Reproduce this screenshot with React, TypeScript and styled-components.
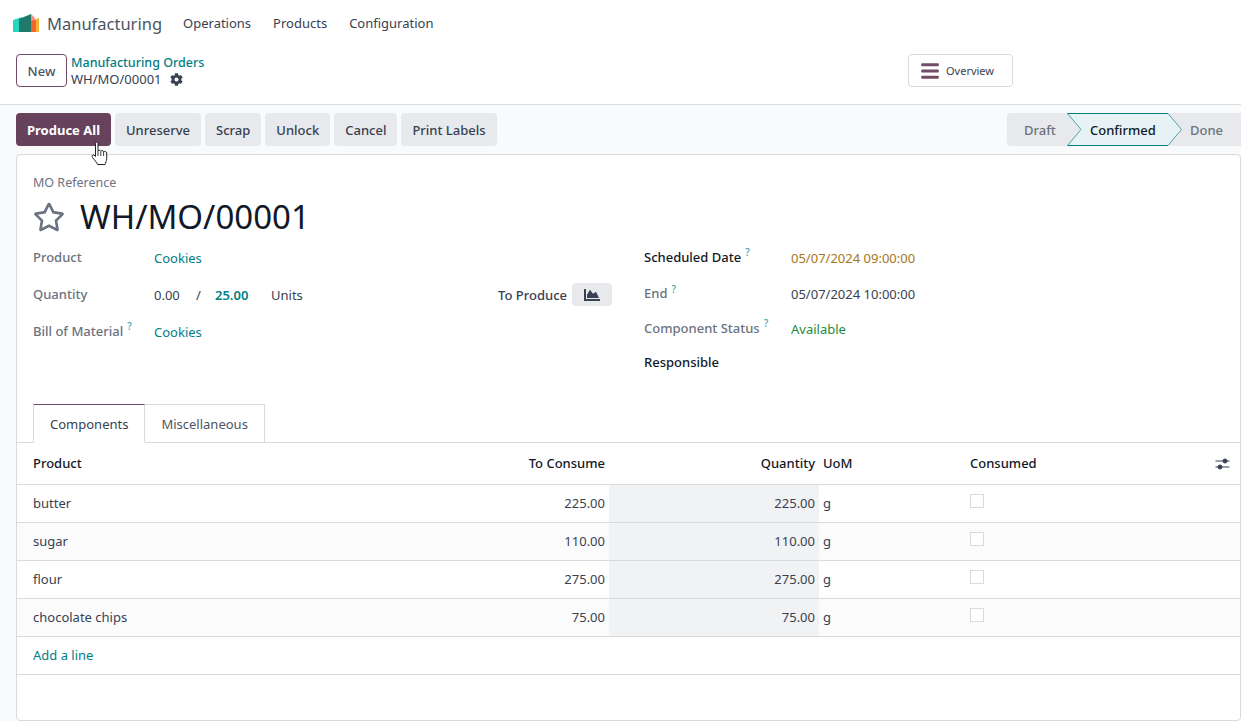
import React from "react";
import styled, { createGlobalStyle } from "styled-components";
import { FaBars, FaChartArea, FaCog, FaRegStar } from "react-icons/fa";

const Global = createGlobalStyle`
  html, body { margin: 0; padding: 0; height: 100%; }
  body { font-family: "Noto Sans", "Open Sans", Arial, sans-serif; font-size: 13px; color: #374151; background: #fff; overflow: hidden; }
  * { box-sizing: border-box; }
`;

const Page = styled.div`
  width: 1241px;
  height: 721px;
  display: flex;
  flex-direction: column;
  position: relative;
  overflow: hidden;
`;
const Nav = styled.nav`
  height: 46px;
  display: flex;
  align-items: center;
  padding-left: 12px;
  flex: none;
`;
const Brand = styled.span`
  font-size: 16.5px;
  color: #4b5563;
  margin-left: 7px;
  margin-right: 21px;
`;
const NavItem = styled.span`
  font-size: 13px;
  color: #374151;
  margin-right: 22px;
`;
const Control = styled.div`
  height: 59px;
  flex: none;
  display: flex;
  align-items: flex-start;
  padding: 8px 0 0 16px;
  border-bottom: 1px solid #d8dadd;
  position: relative;
`;
const NewButton = styled.button`
  width: 51px;
  height: 33px;
  background: #fff;
  border: 1px solid #714b67;
  border-radius: 4px;
  font: 500 13px "Noto Sans", sans-serif;
  color: #4b5563;
  padding: 0;
  margin-right: 4px;
`;
const Crumbs = styled.div`
  display: flex;
  flex-direction: column;
  line-height: 17px;
  padding-top: 0;
`;
const CrumbLink = styled.span`
  font-weight: 500;
  font-size: 12.5px;
  color: #017e84;
`;
const CrumbCurrent = styled.span`
  display: flex;
  align-items: center;
  gap: 8px;
  color: #374151;
  svg { color: #374151; }
`;
const Overview = styled.button`
  position: absolute;
  left: 908px;
  top: 8px;
  width: 105px;
  height: 33px;
  background: #fff;
  border: 1px solid #d8dadd;
  border-radius: 4px;
  display: flex;
  align-items: center;
  gap: 6px;
  padding: 0 0 0 11px;
  font: 400 11px "Noto Sans", sans-serif;
  color: #374151;
  svg { color: #714b67; }
`;
const Main = styled.div`
  flex: 1;
  background: #f9fafb;
  padding: 8px 0 0 16px;
  display: flex;
  flex-direction: column;
  min-height: 0;
`;
const ActionBar = styled.div`
  display: flex;
  justify-content: space-between;
  height: 33px;
  flex: none;
`;
const Actions = styled.div`
  display: flex;
  gap: 4px;
`;
const Action = styled.button<{ $primary?: boolean }>`
  height: 33px;
  padding: 0 11px;
  border: 0;
  border-radius: 4px;
  font: 500 13px "Noto Sans", sans-serif;
  background: ${(p) => (p.$primary ? "#714b67" : "#e7e9ed")};
  background: ${(p) => (p.$primary ? "#66425c" : "#e7e9ed")};
  color: ${(p) => (p.$primary ? "#fff" : "#374151")};
  font-weight: ${(p) => (p.$primary ? 700 : 500)};
`;
const Status = styled.div`
  display: flex;
  width: 234px;
  height: 33px;
  background: #e7e9ed;
  border-radius: 4px 0 0 4px;
  position: relative;
  font-weight: 500;
  color: #6b7280;
  align-items: center;
`;
const Chevron = styled.svg`
  position: absolute;
  left: 60px;
  top: 0;
`;
const Stage = styled.span<{ $width: number; $active?: boolean }>`
  position: relative;
  width: ${(p) => p.$width}px;
  text-align: left;
  color: ${(p) => (p.$active ? "#111827" : "#6b7280")};
`;
const Card = styled.section`
  flex: 1;
  margin-top: 8px;
  background: #fff;
  border: 1px solid #d8dadd;
  border-radius: 4px;
  display: flex;
  flex-direction: column;
  min-height: 0;
  border-bottom-width: 1px;
  margin-bottom: 0;
  height: 566px;
`;
const TitleBlock = styled.div`
  padding: 19px 16px 0;
  height: 84px;
  flex: none;
`;
const Kicker = styled.div`
  color: #6b7280;
  font-size: 12.5px;
  line-height: 17px;
`;
const TitleRow = styled.div`
  display: flex;
  align-items: center;
  gap: 15px;
  margin-top: 3px;
  svg { color: #6b7280; }
`;
const Title = styled.h1`
  margin: 0;
  font-size: 33px;
  font-weight: 400;
  line-height: 45px;
  color: #111827;
`;
const Groups = styled.div`
  display: grid;
  grid-template-columns: 579px 1fr;
  column-gap: 32px;
  padding: 0 16px;
  height: 165px;
  flex: none;
`;
const Column = styled.div`
  display: flex;
  flex-direction: column;
`;
const Row = styled.div<{ $height: number; $labelWidth: number }>`
  height: ${(p) => p.$height}px;
  display: grid;
  grid-template-columns: ${(p) => p.$labelWidth}px 1fr;
  align-items: center;
`;
const Label = styled.span<{ $strong?: boolean }>`
  font-weight: 500;
  color: ${(p) => (p.$strong ? "#111827" : "#6b7280")};
  position: relative;
  top: -1px;
`;
const Help = styled.sup`
  color: #017e84;
  color: #3fa4b5;
  font-size: 10px;
  font-weight: 500;
  margin-left: 4px;
  line-height: 0;
`;
const Value = styled.span<{ $color?: string }>`
  color: ${(p) => p.$color || "#374151"};
`;
const QtyCell = styled.div`
  display: flex;
  align-items: center;
`;
const QtyValue = styled.span<{ $bold?: boolean; $width: number }>`
  width: ${(p) => p.$width}px;
  font-weight: ${(p) => (p.$bold ? 600 : 400)};
  color: ${(p) => (p.$bold ? "#017e84" : "#374151")};
`;
const ToProduce = styled.span`
  margin-left: auto;
  font-weight: 500;
  color: #374151;
  margin-right: 5px;
`;
const ChartButton = styled.span`
  width: 40px;
  height: 23px;
  border-radius: 4px;
  background: #e7e9ed;
  display: flex;
  align-items: center;
  justify-content: center;
  color: #374151;
`;
const Tabs = styled.div`
  display: flex;
  padding-left: 16px;
  height: 39px;
  border-bottom: 1px solid #d8dadd;
  flex: none;
`;
const Tab = styled.div<{ $active?: boolean }>`
  height: 39px;
  padding: 0 16px;
  display: flex;
  align-items: center;
  color: ${(p) => (p.$active ? "#374151" : "#4b5563")};
  background: #fff;
  border: 1px solid #d8dadd;
  border-left-width: ${(p) => (p.$active ? 1 : 0)}px;
  border-bottom-color: ${(p) => (p.$active ? "#fff" : "#d8dadd")};
  border-top-color: ${(p) => (p.$active ? "#714b67" : "#d8dadd")};
`;
const Table = styled.table`
  width: 100%;
  border-collapse: collapse;
  table-layout: fixed;
`;
const HeadCell = styled.th<{ $right?: boolean; $first?: boolean }>`
  height: 41px;
  padding: 0 4px 0 ${(p) => (p.$first ? 16 : 4)}px;
  font-weight: 500;
  color: #111827;
  font-size: 13px;
  text-align: ${(p) => (p.$right ? "right" : "left")};
  border-bottom: 1px solid #d8dadd;
  position: relative;
`;
const BodyRow = styled.tr<{ $even?: boolean }>`
  background: ${(p) => (p.$even ? "#fbfbfc" : "#fff")};
`;
const Cell = styled.td<{ $right?: boolean; $first?: boolean; $shade?: boolean }>`
  height: 38px;
  padding: 0 4px 0 ${(p) => (p.$first ? 16 : 4)}px;
  text-align: ${(p) => (p.$right ? "right" : "left")};
  border-bottom: 1px solid #d8dadd;
  background: ${(p) => (p.$shade ? "#f1f2f4" : "transparent")};
  color: #374151;
`;
const CheckBox = styled.span`
  display: block;
  width: 14px;
  height: 14px;
  border: 1px solid #d8dadd;
  background: #fff;
  position: relative;
  top: -2px;
`;
const AddLine = styled.td`
  height: 38px;
  padding-left: 16px;
  color: #017e84;
  border-bottom: 1px solid #d8dadd;
`;
const Sliders = styled.svg`
  position: absolute;
  right: 10px;
  top: 14px;
`;
const Pointer = styled.svg`
  position: absolute;
  left: 91px;
  top: 141px;
`;

const rows = [
  ["butter", "225.00"],
  ["sugar", "110.00"],
  ["flour", "275.00"],
  ["chocolate chips", "75.00"],
];

export default function App() {
  return (
    <Page>
      <Global />
      <Nav>
        <svg width="28" height="20" viewBox="0 0 28 20">
          <path d="M1 7 L10 4 V19 H1 Z" fill="#25d8bd" />
          <path d="M7 6 L19 1 V19 H7 Z" fill="#1f7a6c" />
          <path d="M19 1 L23 5 V19 H19 Z" fill="#f98f8f" />
          <path d="M19 8 L26 6 V19 H19 Z" fill="#f0692a" />
          <path d="M24 6 L27 5 V19 H24 Z" fill="#fbb13c" />
        </svg>
        <Brand>Manufacturing</Brand>
        <NavItem>Operations</NavItem>
        <NavItem>Products</NavItem>
        <NavItem>Configuration</NavItem>
      </Nav>
      <Control>
        <NewButton>New</NewButton>
        <Crumbs>
          <CrumbLink>Manufacturing Orders</CrumbLink>
          <CrumbCurrent>
            WH/MO/00001 <FaCog size={13} />
          </CrumbCurrent>
        </Crumbs>
        <Overview>
          <FaBars size={20} /> Overview
        </Overview>
      </Control>
      <Main>
        <ActionBar>
          <Actions>
            <Action $primary>Produce All</Action>
            <Action>Unreserve</Action>
            <Action>Scrap</Action>
            <Action>Unlock</Action>
            <Action>Cancel</Action>
            <Action>Print Labels</Action>
          </Actions>
          <Status>
            <Chevron width="116" height="33" viewBox="0 0 116 33">
              <path d="M0.5 0.5 H101 L114.5 16.5 L101 32.5 H0.5 L14 16.5 Z" fill="#e6f2f3" stroke="none" />
              <path d="M0.5 0.5 L14 16.5 L0.5 32.5" fill="none" stroke="#4ea3a6" />
              <path d="M101 0.5 L114.5 16.5 L101 32.5" fill="none" stroke="#4ea3a6" />
              <path d="M0.5 0.5 H101 M0.5 32.5 H101" fill="none" stroke="#017e84" />
            </Chevron>
            <Stage $width={83} style={{ paddingLeft: 17 }}>Draft</Stage>
            <Stage $width={100} $active>Confirmed</Stage>
            <Stage $width={51}>Done</Stage>
          </Status>
        </ActionBar>
        <Card>
          <TitleBlock>
            <Kicker>MO Reference</Kicker>
            <TitleRow>
              <FaRegStar size={32} />
              <Title>WH/MO/00001</Title>
            </TitleRow>
          </TitleBlock>
          <Groups>
            <Column>
              <Row $height={37} $labelWidth={121}>
                <Label>Product</Label>
                <Value $color="#017e84">Cookies</Value>
              </Row>
              <Row $height={37} $labelWidth={121}>
                <Label>Quantity</Label>
                <QtyCell>
                  <QtyValue $width={42}>0.00</QtyValue>
                  <QtyValue $width={19}>/</QtyValue>
                  <QtyValue $width={56} $bold>25.00</QtyValue>
                  <QtyValue $width={40}>Units</QtyValue>
                  <ToProduce>To Produce</ToProduce>
                  <ChartButton>
                    <FaChartArea size={16} />
                  </ChartButton>
                </QtyCell>
              </Row>
              <Row $height={37} $labelWidth={121}>
                <Label>
                  Bill of Material<Help>?</Help>
                </Label>
                <Value $color="#017e84">Cookies</Value>
              </Row>
            </Column>
            <Column>
              <Row $height={37} $labelWidth={147}>
                <Label $strong>
                  Scheduled Date<Help>?</Help>
                </Label>
                <Value $color="#a8751d">05/07/2024 09:00:00</Value>
              </Row>
              <Row $height={36} $labelWidth={147}>
                <Label>
                  End<Help>?</Help>
                </Label>
                <Value>05/07/2024 10:00:00</Value>
              </Row>
              <Row $height={33} $labelWidth={147}>
                <Label>
                  Component Status<Help>?</Help>
                </Label>
                <Value $color="#1e8a3c">Available</Value>
              </Row>
              <Row $height={35} $labelWidth={147}>
                <Label $strong>Responsible</Label>
                <span />
              </Row>
            </Column>
          </Groups>
          <Tabs>
            <Tab $active>Components</Tab>
            <Tab>Miscellaneous</Tab>
          </Tabs>
          <Table>
            <colgroup>
              <col style={{ width: 392 }} />
              <col style={{ width: 200 }} />
              <col style={{ width: 210 }} />
              <col style={{ width: 147 }} />
              <col />
            </colgroup>
            <thead>
              <tr>
                <HeadCell $first>Product</HeadCell>
                <HeadCell $right>To Consume</HeadCell>
                <HeadCell $right>Quantity</HeadCell>
                <HeadCell>UoM</HeadCell>
                <HeadCell>
                  Consumed
                  <Sliders width="15" height="14" viewBox="0 0 15 14" fill="#374151" stroke="#374151">
                    <path d="M0.5 4 H14.5 M0.5 10 H14.5" strokeWidth="1" />
                    <circle cx="10" cy="4" r="2" />
                    <circle cx="5" cy="10" r="2" />
                  </Sliders>
                </HeadCell>
              </tr>
            </thead>
            <tbody>
              {rows.map(([name, qty], i) => (
                <BodyRow key={name} $even={i % 2 === 1}>
                  <Cell $first>{name}</Cell>
                  <Cell $right>{qty}</Cell>
                  <Cell $right $shade>{qty}</Cell>
                  <Cell>g</Cell>
                  <Cell><CheckBox /></Cell>
                </BodyRow>
              ))}
              <tr>
                <AddLine colSpan={5}>Add a line</AddLine>
              </tr>
            </tbody>
          </Table>
        </Card>
      </Main>
      <Pointer width="18" height="25" viewBox="0 0 18 25">
        <path
          d="M4.5 1.5 C5.5 0.8 6.8 1.2 7 2.5 V10 C7.5 9 9.3 9 9.8 10.2 C10.5 9.3 12.2 9.4 12.6 10.8 C13.3 10.1 15.4 10.3 15.7 12 V17.5 C15.7 20 14.5 21.5 14 23.5 H6.5 C5.5 21 3.5 19 1.5 16.5 C0.5 15 1.5 13.3 3 14 L4.5 15.5 V2.5 Z"
          fill="#fff"
          stroke="#222"
          strokeWidth="1"
        />
        <path d="M9.8 10.5 V15 M12.6 11 V15 M7 10 V15" stroke="#222" strokeWidth="0.9" />
      </Pointer>
    </Page>
  );
}
